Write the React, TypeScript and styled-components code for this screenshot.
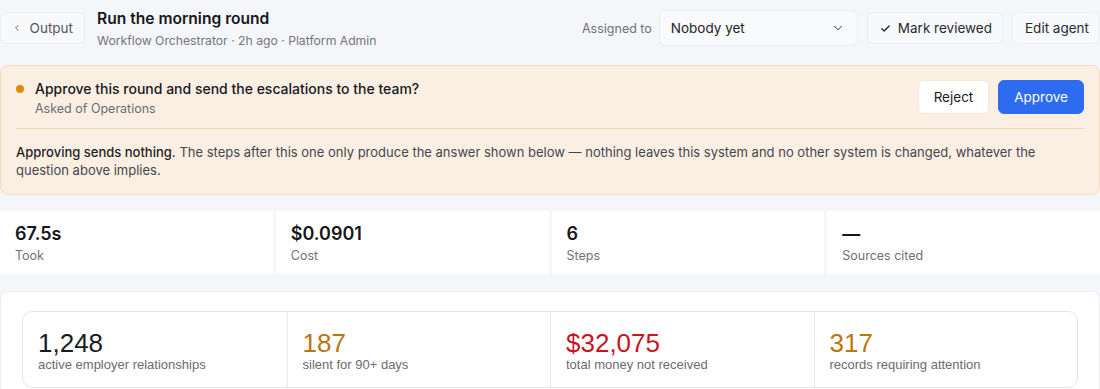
import React from 'react'
import styled, { createGlobalStyle } from 'styled-components'

const GlobalStyle = createGlobalStyle`
  html, body {
    margin: 0;
    padding: 0;
    background: #f5f6f9;
  }
  body {
    font-family: Inter, "Noto Sans", sans-serif;
    color: #1b1c1f;
  }
  * { box-sizing: border-box; }
`

const Page = styled.div`
  width: 1100px;
  display: flex;
  flex-direction: column;
`

const Header = styled.header`
  display: flex;
  align-items: center;
  height: 56px;
`

const GhostButton = styled.button`
  display: flex;
  align-items: center;
  gap: 7px;
  height: 32px;
  padding: 0 10px 0 12px;
  background: #f8f9fb;
  border: 1px solid #eceef2;
  border-radius: 6px;
  font-family: inherit;
  font-size: 13.5px;
  color: #2a2b2f;
  cursor: pointer;
`

const BackButton = styled(GhostButton)`
  color: #55575d;
  width: 85px;
  gap: 8px;
  padding: 0 11px;
`

const TitleBlock = styled.div`
  display: flex;
  flex-direction: column;
  gap: 5px;
  margin-left: 12px;
  flex: 1;
`

const Title = styled.h1`
  margin: 0;
  font-size: 15.6px;
  font-weight: 600;
  color: #17181b;
`

const Meta = styled.div`
  font-size: 12.2px;
  color: #73757b;
`

const Actions = styled.div`
  display: flex;
  align-items: center;
  gap: 9px;
`

const AssignLabel = styled.span`
  font-size: 12.5px;
  color: #6f7177;
  margin-right: -2px;
`

const Select = styled.div`
  display: flex;
  align-items: center;
  justify-content: space-between;
  width: 199px;
  height: 36px;
  padding: 0 12px 0 11px;
  background: #f9fafb;
  border: 1px solid #eceef2;
  border-radius: 6px;
  font-size: 13.5px;
  color: #1f2024;
`

const Caret = styled.span`
  display: flex;
  color: #55575d;
`

const Alert = styled.section`
  margin-top: 9px;
  background: #fbefe3;
  border: 1px solid #f4dcbf;
  border-radius: 8px;
  padding: 14px 15px 15px;
`

const AlertTop = styled.div`
  display: flex;
  align-items: flex-start;
  padding-bottom: 12px;
  border-bottom: 1px solid #f3d6b6;
`

const Dot = styled.span`
  width: 8px;
  height: 8px;
  border-radius: 50%;
  background: #e08a0c;
  margin: 5px 11px 0 0;
  flex-shrink: 0;
`

const Question = styled.div`
  flex: 1;
  display: flex;
  flex-direction: column;
  gap: 4px;
`

const QuestionText = styled.div`
  font-size: 14px;
  line-height: 17px;
  font-weight: 500;
  color: #17181b;
`

const Asked = styled.div`
  font-size: 12.5px;
  line-height: 15px;
  color: #6b6d72;
`

const Decision = styled.button<{ $primary?: boolean }>`
  height: 34px;
  padding: 0 15px;
  margin-left: 9px;
  border-radius: 6px;
  border: 1px solid ${(p) => (p.$primary ? '#2d6cf0' : '#f5e6d6')};
  background: ${(p) => (p.$primary ? '#2d6cf0' : '#ffffff')};
  color: ${(p) => (p.$primary ? '#ffffff' : '#1b1c1f')};
  font-family: inherit;
  font-size: 13.5px;
  cursor: pointer;
`

const Note = styled.p`
  margin: 14px 0 0;
  font-size: 13px;
  line-height: 18px;
  color: #45474c;
`

const NoteLead = styled.span`
  color: #1e1f23;
  font-weight: 500;
`

const StatRow = styled.div`
  margin-top: 16px;
  display: grid;
  grid-template-columns: repeat(4, 1fr);
  gap: 3px;
`

const Stat = styled.div`
  background: #ffffff;
  height: 63px;
  padding: 12px 15px;
  display: flex;
  flex-direction: column;
  gap: 3px;
`

const StatValue = styled.div`
  font-size: 18px;
  font-weight: 600;
  color: #16171a;
  line-height: 22px;
`

const StatLabel = styled.div`
  font-size: 12.5px;
  line-height: 16px;
  color: #6f7177;
`

const Panel = styled.section`
  margin-top: 17px;
  background: #ffffff;
  border: 1px solid #eceef2;
  border-radius: 8px;
  padding: 19px 21px 24px;
`

const Figures = styled.div`
  display: grid;
  grid-template-columns: repeat(4, 1fr);
  border: 1px solid #e4e5e8;
  border-radius: 10px;
  overflow: hidden;
`

const Figure = styled.div`
  padding: 17px 15px 14px;
  font-family: "Liberation Sans", Arial, sans-serif;
  & + & {
    border-left: 1px solid #e8e9ec;
  }
`

const FigureValue = styled.div<{ $tone: string }>`
  font-size: 26px;
  line-height: 28px;
  color: ${(p) => p.$tone};
`

const FigureLabel = styled.div`
  font-size: 13px;
  line-height: 16px;
  color: #6a6c71;
`

const Chevron = ({ dir }: { dir: 'left' | 'down' }) => (
  <svg width={dir === 'left' ? 12 : 14} height={dir === 'left' ? 12 : 14} viewBox="0 0 24 24" fill="none" stroke="currentColor" strokeWidth={dir === 'left' ? 2.2 : 1.8} strokeLinecap="round" strokeLinejoin="round">
    {dir === 'left' ? <path d="M15 18l-6-6 6-6" /> : <path d="M6 9l6 6 6-6" />}
  </svg>
)

const Check = () => (
  <svg width="11" height="11" viewBox="0 0 24 24" fill="none" stroke="currentColor" strokeWidth="3" strokeLinecap="round" strokeLinejoin="round">
    <path d="M4 12.5l5 5L20 6.5" />
  </svg>
)

const stats = [
  { value: '67.5s', label: 'Took' },
  { value: '$0.0901', label: 'Cost' },
  { value: '6', label: 'Steps' },
  { value: '—', label: 'Sources cited' },
]

const figures = [
  { value: '1,248', label: 'active employer relationships', tone: '#1a1b1e' },
  { value: '187', label: 'silent for 90+ days', tone: '#b9770f' },
  { value: '$32,075', label: 'total money not received', tone: '#c8141f' },
  { value: '317', label: 'records requiring attention', tone: '#b9770f' },
]

export default function App() {
  return (
    <Page>
      <GlobalStyle />
      <Header>
        <BackButton>
          <Chevron dir="left" />
          Output
        </BackButton>
        <TitleBlock>
          <Title>Run the morning round</Title>
          <Meta>Workflow Orchestrator · 2h ago · Platform Admin</Meta>
        </TitleBlock>
        <Actions>
          <AssignLabel>Assigned to</AssignLabel>
          <Select>
            Nobody yet
            <Caret>
              <Chevron dir="down" />
            </Caret>
          </Select>
          <GhostButton>
            <Check />
            Mark reviewed
          </GhostButton>
          <GhostButton>Edit agent</GhostButton>
        </Actions>
      </Header>

      <Alert>
        <AlertTop>
          <Dot />
          <Question>
            <QuestionText>Approve this round and send the escalations to the team?</QuestionText>
            <Asked>Asked of Operations</Asked>
          </Question>
          <Decision>Reject</Decision>
          <Decision $primary>Approve</Decision>
        </AlertTop>
        <Note>
          <NoteLead>Approving sends nothing.</NoteLead> The steps after this one only produce the answer
          shown below — nothing leaves this system and no other system is changed, whatever the
          question above implies.
        </Note>
      </Alert>

      <StatRow>
        {stats.map((s) => (
          <Stat key={s.label}>
            <StatValue>{s.value}</StatValue>
            <StatLabel>{s.label}</StatLabel>
          </Stat>
        ))}
      </StatRow>

      <Panel>
        <Figures>
          {figures.map((f) => (
            <Figure key={f.label}>
              <FigureValue $tone={f.tone}>{f.value}</FigureValue>
              <FigureLabel>{f.label}</FigureLabel>
            </Figure>
          ))}
        </Figures>
      </Panel>
    </Page>
  )
}
